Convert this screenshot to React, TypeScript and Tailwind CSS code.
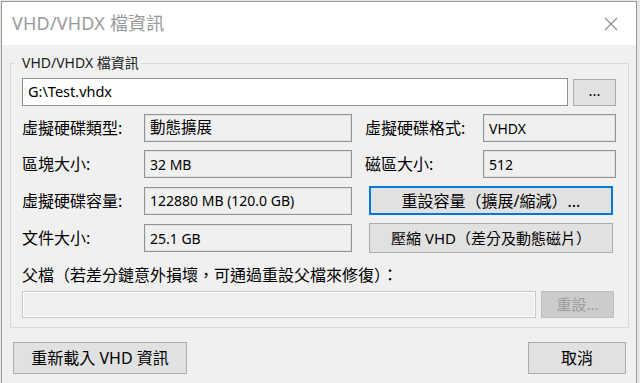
const font = { fontFamily: '"Noto Sans", "Noto Sans CJK TC", sans-serif' };

function Field({ value, className = "" }: { value: string; className?: string }) {
  return (
    <div
      className={`h-[28px] flex items-center px-[5px] bg-[#f0f0f0] border border-[#939393] shadow-[inset_0_0_0_1px_#e3e3e3] text-[14px] text-black whitespace-nowrap ${className}`}
    >
      {value}
    </div>
  );
}

function Label({ text, className = "" }: { text: string; className?: string }) {
  return <div className={`text-[16px] leading-[20px] text-black whitespace-nowrap ${className}`}>{text}</div>;
}

function Button({
  children,
  className = "",
  focused = false,
  disabled = false,
}: {
  children: React.ReactNode;
  className?: string;
  focused?: boolean;
  disabled?: boolean;
}) {
  const border = focused
    ? "border-2 border-[#0078d7]"
    : disabled
    ? "border border-[#bfbfbf]"
    : "border border-[#adadad]";
  const bg = disabled ? "bg-[#cccccc] text-[#9d9d9d]" : "bg-[#e1e1e1] text-black";
  return (
    <button className={`flex items-center justify-center whitespace-nowrap ${border} ${bg} ${className}`}>
      {children}
    </button>
  );
}

export default function App() {
  return (
    <div className="w-[640px] h-[383px] bg-[#e6e6e6] overflow-hidden" style={font}>
      <div className="ml-[1px] mt-[1px] w-[636px] h-[400px] border-l border-t border-r border-[#9a9a9a] bg-[#f0f0f0]">
        {/* title bar */}
        <div className="h-[43px] bg-white flex items-center justify-between pl-[10px] pr-[18px]">
          <span className="text-[18px] text-[#9a9a9a] tracking-[0.2px]">VHD/VHDX 檔資訊</span>
          <svg width="14" height="14" viewBox="0 0 14 14">
            <path d="M1 1 L13 13 M13 1 L1 13" stroke="#8a8a8a" strokeWidth="1.1" fill="none" />
          </svg>
        </div>

        {/* body */}
        <div className="pl-[8px] pr-[7px] pt-[9px]">
          <fieldset className="border border-[#d9d9d9] pl-[11px] pr-[11px] pt-[6px] pb-[9px] m-0">
            <legend className="ml-[-7px] pl-[7px] pr-[2px] text-[14px] text-[#1c1c1c] leading-[18px]">VHD/VHDX 檔資訊</legend>

            <div className="flex items-center gap-[5px]">
              <div className="w-[546px] h-[28px] flex items-center px-[5px] bg-white border border-[#8f8f8f] text-[14.5px] text-black">
                G:\Test.vhdx
              </div>
              <Button className="w-[43px] h-[27px] pb-[4px] text-[15px]">...</Button>
            </div>

            <div className="mt-[8px] flex flex-col gap-[8px]">
              <div className="flex items-center">
                <Label text="虛擬硬碟類型:" className="w-[122px]" />
                <Field value="動態擴展" className="w-[208px] text-[15.5px]" />
                <Label text="虛擬硬碟格式:" className="ml-[13px] w-[118px]" />
                <Field value="VHDX" className="w-[133px]" />
              </div>
              <div className="flex items-center">
                <Label text="區塊大小:" className="w-[122px]" />
                <Field value="32 MB" className="w-[208px]" />
                <Label text="磁區大小:" className="ml-[13px] w-[118px]" />
                <Field value="512" className="w-[133px]" />
              </div>
              <div className="flex items-center">
                <Label text="虛擬硬碟容量:" className="w-[122px]" />
                <Field value="122880 MB (120.0 GB)" className="w-[208px]" />
                <Button focused className="ml-[17px] w-[244px] h-[29px] text-[16px]">
                  重設容量（擴展/縮減）...
                </Button>
              </div>
              <div className="flex items-center">
                <Label text="文件大小:" className="w-[122px]" />
                <Field value="25.1 GB" className="w-[208px]" />
                <Button className="ml-[17px] w-[244px] h-[30px] text-[15px]">壓縮 VHD（差分及動態磁片）</Button>
              </div>
            </div>

            <Label text="父檔（若差分鏈意外損壞，可通過重設父檔來修復）：" className="mt-[12px]" />

            <div className="mt-[6px] flex items-center gap-[5px]">
              <div className="w-[514px] h-[27px] bg-[#f0f0f0] border border-[#c8c8c8] shadow-[inset_0_0_0_1px_#ffffff]" />
              <Button disabled className="w-[73px] h-[27px] text-[15px]">
                重設...
              </Button>
            </div>
          </fieldset>

          <div className="mt-[14px] flex justify-between pl-[3px] pr-[3px]">
            <Button className="w-[174px] h-[32px] text-[16px]">重新載入 VHD 資訊</Button>
            <Button className="w-[98px] h-[32px] text-[16px]">取消</Button>
          </div>
        </div>
      </div>
    </div>
  );
}
